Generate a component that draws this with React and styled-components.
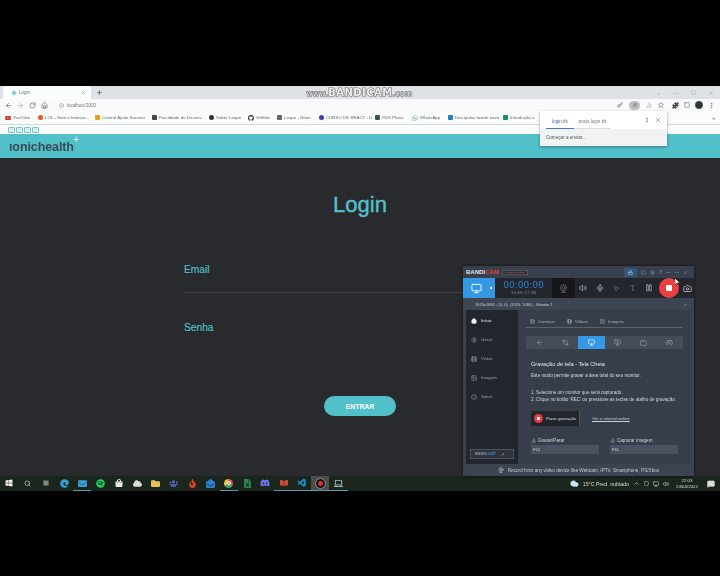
import React from "react";
import styled, { createGlobalStyle } from "styled-components";
import {
  ArrowLeft, ArrowRight, RotateCw, Home, Plus, X, Info, Key, Star, Puzzle, Square, MoreVertical,
  Monitor, Volume2, Mic, MousePointer2, Pause, Camera, Lock, Folder, Settings, Film, Image as ImageIcon,
  Search, Webcam, ChevronUp, Crop, Gamepad2, Tv, MonitorPlay, Cloud, MessageSquare, BarChart2, Files, CalendarDays,
} from "lucide-react";
import {
  FaYoutube, FaGithub, FaWhatsapp, FaEdge, FaEnvelope, FaSpotify, FaShoppingBag, FaCloud, FaFolder, FaUsers, FaFire,
  FaEnvelopeOpen, FaFileExcel, FaDiscord, FaWindows, FaBookOpen, FaBars, FaLaptop,
} from "react-icons/fa";
import { VscVscode } from "react-icons/vsc";

const Global = createGlobalStyle`
  html, body { margin: 0; padding: 0; background: #000; }
  * { box-sizing: border-box; }
  #root { width: 720px; height: 576px; overflow: hidden; font-family: "Liberation Sans", Arial, sans-serif; }
`;

const Stage = styled.div`
  width: 720px; height: 576px; background: #000; padding-top: 86px; position: relative;
`;
const Screen = styled.div`
  width: 720px; height: 405px; display: flex; flex-direction: column; position: relative; overflow: hidden;
`;

const TabStrip = styled.div`
  height: 13px; background: #dee1e6; display: flex; align-items: flex-end; padding-left: 3px; flex: none; gap: 5px;
`;
const Tab = styled.div`
  width: 88px; height: 13px; background: #fbfcfc; border-radius: 3px 3px 0 0; display: flex; align-items: center;
  padding: 0 5px; gap: 3px; font-size: 4.5px; color: #777; filter: blur(.3px);
`;
const TabTitle = styled.span`flex: 1;`;
const Favicon = styled.span`width: 4px; height: 4px; background: #7fd3db; transform: rotate(45deg); flex: none; margin-left: 4px;`;
const NewTab = styled.span`display: flex; align-self: center; color: #444;`;
const WinControls = styled.div`
  margin-left: auto; display: flex; gap: 12px; padding-right: 6px; align-self: center; color: #a8aaad;
  font-size: 6px; align-items: center;
`;
const Toolbar = styled.div`
  height: 12px; background: #f9fafa; display: flex; align-items: center; padding: 0 5px 0 5px; gap: 5px; flex: none; color: #555;
`;
const Address = styled.div`
  height: 9px; display: flex; align-items: center; gap: 3px; font-size: 4.5px; color: #777;
  padding-left: 6px; filter: blur(.3px);
`;
const ToolRight = styled.div`display: flex; align-items: center; gap: 5px; margin-left: auto;`;
const ToolGroup = styled.div`display: flex; align-items: center; gap: 6px; margin-right: 3px;`;
const KeyPill = styled.span`
  width: 11px; height: 9px; border-radius: 5px; background: #bdbec0; display: flex; align-items: center; justify-content: center;
`;
const Avatar = styled.span`width: 8px; height: 8px; border-radius: 50%; background: radial-gradient(circle, #333 45%, #4a8 100%);`;

const Bookmarks = styled.div`
  height: 14px; background: #fafbfb; border-bottom: 1px solid #d6d8da; display: flex; align-items: center; padding-left: 5px; flex: none;
`;
const Bookmark = styled.div`
  width: ${p => p.$w}px; display: flex; align-items: center; gap: 2px; font-size: 4.4px; color: #666; white-space: nowrap;
  filter: blur(.3px); flex: none;
`;
const BmIcon = styled.span`
  width: 5px; height: 5px; border-radius: ${p => p.$round ? "50%" : "1px"}; background: ${p => p.$c}; flex: none;
`;
const BookmarkEnd = styled.span`margin-left: auto; padding-right: 5px; font-size: 5px; color: #666;`;

const PageTabs = styled.div`
  height: 9px; background: #fbfcfc; display: flex; align-items: center; gap: 1px; padding-left: 8px; flex: none;
`;
const PageTabIcon = styled.span`
  width: 7px; height: 6px; border: 1px solid #73c8d0; border-radius: 1px; background: #d8f0f2;
`;
const Header = styled.div`
  height: 24px; background: #52c0c9; display: flex; align-items: center; padding-left: 9px; flex: none;
`;
const Logo = styled.div`
  font-size: 12.5px; font-weight: 700; color: #3a4b50; position: relative; line-height: 1; margin-top: 2px; letter-spacing: -.1px; filter: blur(.2px);
`;
const LogoPlus = styled.sup`
  color: #e8f7f8; font-size: 10px; font-weight: 400; position: absolute; top: -6px; right: -5px; line-height: 1;
`;
const Page = styled.div`
  flex: 1; background: #292a2d; display: flex; flex-direction: column; align-items: center; min-height: 0;
`;
const Title = styled.h1`
  margin: 34px 0 0; font-size: 22px; line-height: 26px; font-weight: 400; color: #52c0c9; -webkit-text-stroke: .4px #52c0c9;
`;
const Form = styled.div`
  width: 352px; margin-top: 46px; display: flex; flex-direction: column;
`;
const Field = styled.div`
  height: 29px; border-bottom: 1px solid ${p => p.$line ? "#424346" : "transparent"}; margin-bottom: ${p => p.$mb}px;
  font-size: 10.2px; line-height: 12px; color: #52c0c9; -webkit-text-stroke: .15px #52c0c9;
`;
const Submit = styled.button`
  align-self: center; width: 72px; height: 20px; border: 0; border-radius: 10px; background: #52c0c9; color: #fff;
  font: 700 6.8px "Liberation Sans", Arial, sans-serif; margin-top: 45px;
`;
const Taskbar = styled.div`
  position: absolute; left: 0; right: 0; bottom: 0; height: 15px; background: #1a261c; display: flex; align-items: center;
`;
const Tasks = styled.div`display: flex; align-items: center; height: 100%;`;
const TaskCell = styled.div`
  width: 18.3px; height: 15px; flex: none; display: flex; align-items: center; justify-content: center; color: ${p => p.$c || "#e8e8e8"};
  background: ${p => p.$active ? "#4a4e4c" : "transparent"};
  border-bottom: 1px solid ${p => p.$open ? "#5f9ab5" : "transparent"};
`;
const ChromeDot = styled.span`
  width: 9px; height: 9px; border-radius: 50%; display: flex; align-items: center; justify-content: center;
  background: conic-gradient(#e8503f 0 33%, #3ea85a 33% 66%, #f5c02e 66%);
`;
const ChromeCore = styled.span`width: 4px; height: 4px; border-radius: 50%; background: #4d8df0; border: .5px solid #fff;`;
const RecDot = styled.span`
  width: 9px; height: 9px; border-radius: 50%; background: #e02a2f; border: 2px solid #111; outline: 1px solid #888;
`;
const Tray = styled.div`
  margin-left: auto; display: flex; align-items: center; gap: 4px; color: #ddd; font-size: 5.3px; padding-right: 5px; height: 100%;
  filter: blur(.25px);
`;
const TrayClock = styled.div`
  font-size: 4.4px; text-align: center; line-height: 6px; width: 24px; margin: 0 4px 0 2px;
`;
const Watermark = styled.div`
  position: absolute; left: 304px; top: 2px; width: 111px; height: 10px;
  color: #ececec; font: 700 10px/10px "DejaVu Sans", sans-serif; text-align: center; white-space: nowrap; letter-spacing: .45px;
  -webkit-text-stroke: 1.2px #6a6a6a; paint-order: stroke fill; filter: blur(.15px);
`;
const WatermarkSmall = styled.span`font-size: 7.6px; font-weight: 400; letter-spacing: .3px;`;
const Popup = styled.div`
  position: absolute; left: 540px; top: 25px; width: 127px; height: 35px; background: #f1f3f3; box-shadow: 0 1px 3px rgba(0,0,0,.35);
  color: #666; font-size: 4.6px; display: flex; flex-direction: column;
`;
const PopupTabs = styled.div`
  height: 18px; background: #fff; display: flex; align-items: center; padding: 0 6px; position: relative;
`;
const PopupTab = styled.span`
  width: ${p => p.$w}px; height: 13px; margin-top: 4px; display: flex; align-items: center; justify-content: center;
  color: ${p => p.$on ? "#3e6fa8" : "#777"};
  border-bottom: 1px solid ${p => p.$on ? "#4478c0" : "#d8dadc"}; filter: blur(.25px);
`;
const PopupActions = styled.span`margin-left: auto; display: flex; gap: 5px; align-items: center; color: #555;`;
const PopupBody = styled.div`padding: 6px; color: #555; filter: blur(.25px);`;

const Bandi = styled.div`
  position: absolute; left: 463px; top: 180px; width: 231px; height: 210px; background: #3a4351; display: flex; flex-direction: column;
  color: #c9ced6; box-shadow: 0 0 3px rgba(0,0,0,.6); font-size: 4.6px;
`;
const BandiTitle = styled.div`
  height: 12px; background: #37404c; display: flex; align-items: center; padding: 0 6px 0 3px; flex: none;
`;
const BandiBrand = styled.span`font-weight: 700; font-size: 6px; color: #dfe2e6;`;
const BandiCam = styled.span`color: #e2453f;`;
const Unreg = styled.span`
  width: 26px; height: 5px; margin-left: 3px; background: #2a2f38; border: 1px solid #555; color: #c55; font-size: 2.5px; line-height: 3px; white-space: nowrap; text-align: center;
`;
const BandiTop = styled.div`margin-left: auto; display: flex; align-items: center; gap: 4px; color: #93a0b0;`;
const LockCell = styled.span`
  width: 13px; height: 9px; background: #34567c; color: #e6eef8; display: flex; align-items: center; justify-content: center;
`;
const BandiBar = styled.div`
  height: 20px; background: #23262c; display: flex; align-items: center; flex: none; color: #9aa2ac;
`;
const ModeBtn = styled.div`
  width: 32px; height: 20px; background: #3498e4; color: #fff; display: flex; align-items: center; justify-content: space-between; padding: 0 3px 0 8px; flex: none;
`;
const Caret = styled.span`width: 2px; height: 2px; background: #fff;`;
const Timer = styled.div`
  width: 57px; display: flex; flex-direction: column; align-items: center; flex: none; color: #2b82cf;
  font: 400 9px/10px "DejaVu Sans", sans-serif; filter: blur(.15px);
`;
const TimerSub = styled.span`font: 3.6px/6px "Liberation Sans", sans-serif; color: #8a919b;`;
const CamBox = styled.div`
  width: 23px; height: 20px; background: #15171a; display: flex; align-items: center; justify-content: center; color: #6b7078; flex: none;
`;
const BarTools = styled.div`
  flex: 1; display: flex; align-items: center; height: 100%;
`;
const BarTool = styled.span`
  width: 16.5px; display: flex; justify-content: center; color: ${p => p.$dim ? "#6f757e" : "#b8bec6"}; font-size: 8px; font-family: "Liberation Serif", serif;
`;
const RecBtn = styled.span`
  width: 20px; height: 20px; border-radius: 50%; background: #ea4044; display: flex; align-items: center; justify-content: center; flex: none; margin: 0 4px 0 1px;
`;
const RecStop = styled.span`width: 6px; height: 6px; background: #fff; border-radius: .5px;`;
const SubBar = styled.div`
  height: 12px; background: #3d4552; display: flex; align-items: center; padding: 0 6px 0 12px; flex: none; font-size: 4px; filter: blur(.25px);
  justify-content: space-between; color: #c6cbd2;
`;
const BandiMain = styled.div`
  flex: 1; display: flex; margin: 0 3px; min-height: 0;
`;
const Side = styled.div`
  width: 52px; background: #23262d; display: flex; flex-direction: column; padding: 1px 0 5px 5px; flex: none;
`;
const SideItem = styled.div`
  height: 19px; display: flex; align-items: center; gap: 4px; font-size: 4.4px; color: ${p => p.$on ? "#eef0f2" : "#98a0aa"}; filter: blur(.2px);
`;
const BandicutBox = styled.div`
  margin-top: auto; width: 44px; height: 10px; margin-left: -1px; border: 1px solid #4c5460; background: #2e333c; display: flex; align-items: center; padding-left: 4px;
  font-size: 3.8px; font-weight: 700; color: #8c949e; gap: 1px;
`;
const BandicutAccent = styled.span`color: #3498e4; margin-right: 4px;`;
const Content = styled.div`
  flex: 1; background: #373e4a; padding: 6px 8px 0; display: flex; flex-direction: column; min-width: 0;
`;
const ContentTabs = styled.div`
  height: 12px; display: flex; align-items: center; gap: 12px; border-bottom: 1px solid #5a6270; padding-left: 4px; font-size: 4.2px; color: #aab0b9; filter: blur(.2px); flex: none; padding-bottom: 1px;
`;
const ContentTab = styled.span`display: flex; align-items: center; gap: 3px;`;
const ModeRow = styled.div`
  margin-top: 8px; height: 13px; background: #454c5a; display: flex; flex: none; color: #98a0ac;
`;
const ModeCell = styled.span`
  flex: 1; display: flex; align-items: center; justify-content: center; color: ${p => p.$on ? "#fff" : "inherit"};
  background: ${p => p.$on ? "#3498e4" : "transparent"};
`;
const Heading = styled.div`margin: 12px 0 0 5px; font-size: 5.6px; line-height: 7px; color: #e4e7ea; filter: blur(.2px);`;
const Para = styled.div`margin: 4px 0 0 5px; font-size: 4.6px; line-height: 7px; color: #d6d9de; filter: blur(.2px);`;
const List = styled.div`margin: 10px 0 0 5px; font-size: 4.6px; line-height: 7px; color: #d0d4da; filter: blur(.2px); white-space: nowrap;`;
const RecRow = styled.div`margin: 8px 0 0 5px; display: flex; align-items: center; gap: 12px; font-size: 4.4px; flex: none;`;
const StartRec = styled.span`
  width: 49px; height: 15px; background: #22252b; display: flex; align-items: center; gap: 3px; padding-left: 3px; color: #dde0e4; border-right: 1px solid #555;
`;
const SmallRec = styled.span`
  width: 9px; height: 9px; border-radius: 50%; background: #e33d40; display: flex; align-items: center; justify-content: center;
`;
const SmallStop = styled.span`width: 3px; height: 3px; background: #fff;`;
const LinkText = styled.span`text-decoration: underline; color: #cfd3d9;`;
const Hotkeys = styled.div`margin: 11px 0 0 5px; display: grid; grid-template-columns: 68px 68px; column-gap: 11px; flex: none;`;
const HotLabel = styled.div`display: flex; align-items: center; gap: 2px; height: 6px; font-size: 4.6px; color: #d0d4da; filter: blur(.15px);`;
const HotInput = styled.div`
  height: 9px; margin-top: 2px; background: #4a5160; font-size: 4px; color: #d0d4da; display: flex; align-items: center; padding-left: 2px;
`;
const Column = styled.div`display: flex; flex-direction: column;`;
const BandiFooter = styled.div`
  height: 12px; background: #3c4451; margin: 0 3px; display: flex; align-items: center; justify-content: center; gap: 4px; font-size: 4.7px; color: #c5cad1; flex: none; filter: blur(.2px);
`;
const Cursor = styled.svg`position: absolute; left: 212px; top: 12px;`;

const bookmarks = [
  ["YouTube", <FaYoutube size={6} color="#d8322a" />, 33], ["LOL - Sem a Imensa...", <BmIcon $c="#e85a20" $round />, 57],
  ["Central Ajuda Socorro", <BmIcon $c="#e8a020" />, 57], ["Faculdade de Desenv", <BmIcon $c="#444" />, 57],
  ["Saber Loupe", <BmIcon $c="#333" $round />, 39], ["GitHub", <FaGithub size={6} color="#222" />, 29],
  ["Loupe - Glam", <BmIcon $c="#666" />, 42], ["CURSO DE REACT - D", <BmIcon $c="#3940a8" $round />, 56],
  ["PDS Plano", <BmIcon $c="#355" />, 37], ["WhatsApp", <FaWhatsapp size={6} color="#3bb44a" />, 36],
  ["Discípulos fazem novo", <BmIcon $c="#2a7ac0" />, 55], ["Introdução a", <BmIcon $c="#1a8a70" />, 37],
];
const tasks = [
  { el: <FaEdge size={9} />, c: "#2fa8d8" }, { el: <FaEnvelope size={9} />, c: "#3aa0dc", open: true }, { el: <FaSpotify size={9} />, c: "#1ed760" },
  { el: <FaShoppingBag size={8} />, c: "#e8e8e8" }, { el: <FaCloud size={9} />, c: "#ddd" }, { el: <FaFolder size={9} />, c: "#e8c35a" },
  { el: <FaUsers size={9} />, c: "#5f62c0" }, { el: <FaFire size={9} />, c: "#d8432c" }, { el: <FaEnvelopeOpen size={9} />, c: "#2a80cc" },
  { el: <ChromeDot><ChromeCore /></ChromeDot>, open: true }, { el: <FaFileExcel size={9} />, c: "#2a8a54" }, { el: <FaDiscord size={10} />, c: "#6a75f2" },
  { el: <FaBookOpen size={8} />, c: "#d04a3a", open: true }, { el: <VscVscode size={10} />, c: "#1e88d8", open: true },
  { el: <RecDot />, active: true, open: true }, { el: <FaLaptop size={9} />, c: "#9fbcc6", open: true },
];

export default function App() {
  return (
    <Stage>
      <Global />
      <Screen>
        <TabStrip>
          <Tab><Favicon /><TabTitle>Login</TabTitle><X size={5} /></Tab>
          <NewTab><Plus size={7} /></NewTab>
          <WinControls><span>⌄</span><span>—</span><Square size={5} /><X size={6} /></WinControls>
        </TabStrip>
        <Toolbar>
          <ArrowLeft size={7} /><ArrowRight size={7} color="#999" /><RotateCw size={7} /><Home size={7} />
          <Address><Info size={5} />localhost:3000</Address>
          <ToolRight>
            <ToolGroup>
              <Key size={6} /><KeyPill><Files size={4} /></KeyPill><BarChart2 size={6} color="#888" /><Star size={6} />
            </ToolGroup>
            <Puzzle size={7} fill="#444" /><Square size={6} /><Avatar /><MoreVertical size={7} />
          </ToolRight>
        </Toolbar>
        <Bookmarks>
          {bookmarks.map(([t, icon, w]) => (
            <Bookmark key={t} $w={w}>{icon}{t}</Bookmark>
          ))}
          <BookmarkEnd>»</BookmarkEnd>
        </Bookmarks>
        <PageTabs>
          <PageTabIcon /><PageTabIcon /><PageTabIcon /><PageTabIcon />
        </PageTabs>
        <Header>
          <Logo>ıonichealth<LogoPlus>+</LogoPlus></Logo>
        </Header>
        <Page>
          <Title>Login</Title>
          <Form>
            <Field $line $mb={29}>Email</Field>
            <Field $mb={0}>Senha</Field>
            <Submit>ENTRAR</Submit>
          </Form>
        </Page>

        <Taskbar>
          <Tasks>
            <TaskCell><FaWindows size={8} color="#f2f2f2" /></TaskCell>
            <TaskCell><Search size={7} /></TaskCell>
            <TaskCell><FaBars size={6} /></TaskCell>
            {tasks.map((t, i) => (
              <TaskCell key={i} $open={t.open} $active={t.active} $c={t.c}>{t.el}</TaskCell>
            ))}
          </Tasks>
          <Tray>
            <Cloud size={9} fill="#cfe6f5" color="#cfe6f5" />
            <span>15°C  Pred. nublado</span>
            <ChevronUp size={7} />
            <Square size={5} />
            <Monitor size={6} />
            <Volume2 size={6} />
            <TrayClock>22:03<br />24/04/2022</TrayClock>
            <MessageSquare size={8} fill="#ddd" />
          </Tray>
        </Taskbar>

        <Watermark><WatermarkSmall>www.</WatermarkSmall>BANDICAM<WatermarkSmall>.com</WatermarkSmall></Watermark>

        <Popup>
          <PopupTabs>
            <PopupTab $on $w={28}>login.tfs</PopupTab>
            <PopupTab $w={37}>posts.login.tfs</PopupTab>
            <PopupActions><MoreVertical size={6} /><X size={6} /></PopupActions>
          </PopupTabs>
          <PopupBody>Começar a enviar...</PopupBody>
        </Popup>

        <Bandi>
          <BandiTitle>
            <BandiBrand>BANDI<BandiCam>CAM</BandiCam></BandiBrand>
            <Unreg>UNREGISTERED</Unreg>
            <BandiTop>
              <LockCell><Lock size={5} /></LockCell>
              <Folder size={5} /><Settings size={5} /><span>?</span><span>—</span><span>—</span><X size={5} />
            </BandiTop>
          </BandiTitle>
          <BandiBar>
            <ModeBtn><Monitor size={11} /><Caret /></ModeBtn>
            <Timer>00:00:00<TimerSub>3.0 KB / 2.7 GB</TimerSub></Timer>
            <CamBox><Webcam size={9} /></CamBox>
            <BarTools>
              <BarTool><Volume2 size={8} /></BarTool>
              <BarTool><Mic size={8} /></BarTool>
              <BarTool $dim><MousePointer2 size={7} /></BarTool>
              <BarTool $dim>T</BarTool>
              <BarTool><Pause size={8} /></BarTool>
              <RecBtn><RecStop /></RecBtn>
              <Camera size={9} color="#c8ccd2" />
            </BarTools>
          </BandiBar>
          <SubBar><span>1920x1080 - (0, 0), (1920, 1080) - Monitor 1</span><ChevronUp size={5} /></SubBar>
          <BandiMain>
            <Side>
              <SideItem $on><Home size={6} fill="#eef0f2" />Início</SideItem>
              <SideItem><Settings size={6} />Geral</SideItem>
              <SideItem><Film size={6} />Vídeo</SideItem>
              <SideItem><ImageIcon size={6} />Imagem</SideItem>
              <SideItem><Info size={6} />Sobre</SideItem>
              <BandicutBox>BANDI<BandicutAccent>CUT</BandicutAccent>↗</BandicutBox>
            </Side>
            <Content>
              <ContentTabs>
                <ContentTab><CalendarDays size={5} />Começar</ContentTab>
                <ContentTab><Film size={5} />Vídeos</ContentTab>
                <ContentTab><ImageIcon size={5} />Imagens</ContentTab>
              </ContentTabs>
              <ModeRow>
                <ModeCell><ArrowLeft size={7} /></ModeCell>
                <ModeCell><Crop size={7} /></ModeCell>
                <ModeCell $on><Monitor size={7} /></ModeCell>
                <ModeCell><MonitorPlay size={7} /></ModeCell>
                <ModeCell><Tv size={7} /></ModeCell>
                <ModeCell><Gamepad2 size={7} /></ModeCell>
              </ModeRow>
              <Heading>Gravação de tela - Tela Cheia</Heading>
              <Para>Este modo permite gravar a área total do seu monitor.</Para>
              <List>
                1. Selecione um monitor que será capturado.<br />
                2. Clique no botão 'REC' ou pressione as teclas de atalho de gravação.
              </List>
              <RecRow>
                <StartRec><SmallRec><SmallStop /></SmallRec>Parar gravação</StartRec>
                <LinkText>Ver o tutorial online</LinkText>
              </RecRow>
              <Hotkeys>
                <Column>
                  <HotLabel><BarChart2 size={5} />Gravar/Parar</HotLabel>
                  <HotInput>F12</HotInput>
                </Column>
                <Column>
                  <HotLabel><BarChart2 size={5} />Capturar imagem</HotLabel>
                  <HotInput>F11</HotInput>
                </Column>
              </Hotkeys>
            </Content>
          </BandiMain>
          <BandiFooter><Webcam size={6} />Record from any video device like Webcam, IPTV, Smartphone, PS/Xbox</BandiFooter>
          <Cursor width="6" height="8" viewBox="0 0 6 8"><path d="M0 0 L0 7 L2 5 L5 5 Z" fill="#fff" stroke="#000" strokeWidth=".5" /></Cursor>
        </Bandi>
      </Screen>
    </Stage>
  );
}
